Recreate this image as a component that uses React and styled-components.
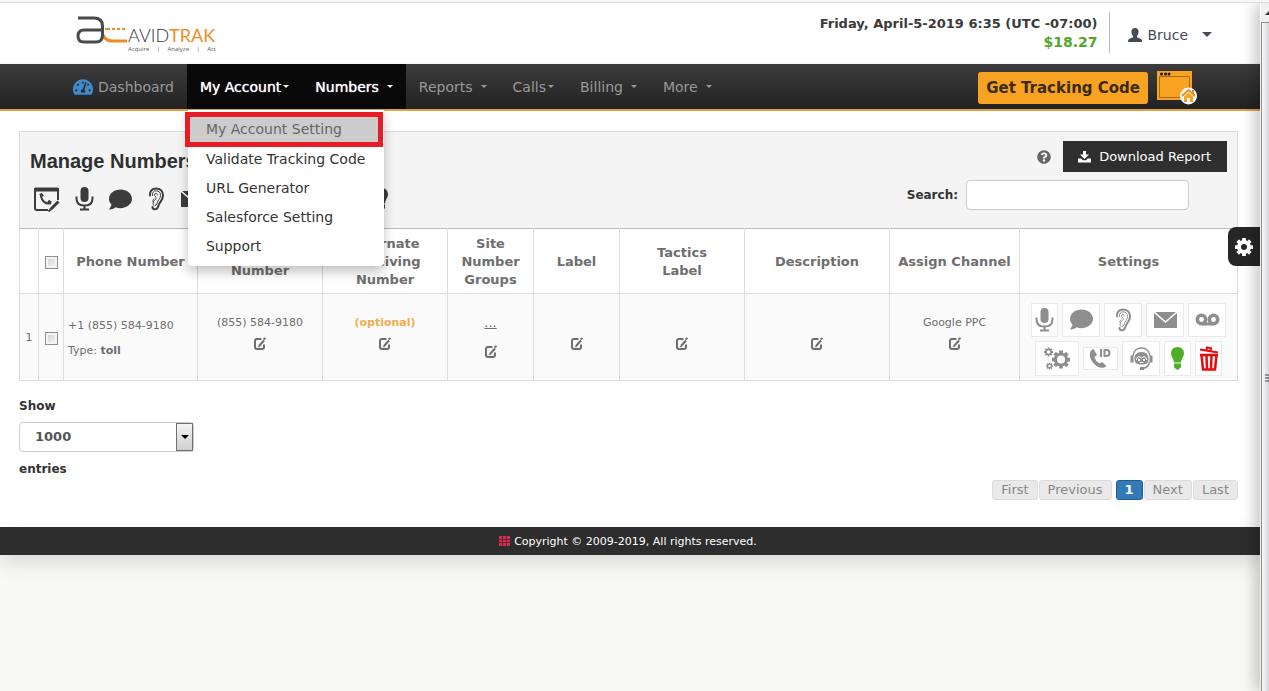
import React from "react";
import styled, { createGlobalStyle, css } from "styled-components";
import { FaTachometerAlt, FaComment, FaQuestionCircle } from "react-icons/fa";

const Global = createGlobalStyle`
  * { box-sizing: border-box; }
  body {
    margin: 0;
    background: #f8f8f6;
    color: #333;
    font-family: "DejaVu Sans", Verdana, sans-serif;
    font-size: 14px;
    overflow: hidden;
  }
  button, input, select { font: inherit; color: inherit; }
  a { color: inherit; text-decoration: none; }
  svg { display: block; flex: none; }
`;

const Window = styled.div`
  display: grid;
  grid-template-columns: 1fr 9px;
  grid-template-rows: 3px 1fr;
  height: 100vh;
`;
const WindowEdge = styled.div`
  grid-column: 1 / -1;
  background: #f6f6f6;
  border-bottom: 1px solid #ddd;
`;
const Page = styled.div`
  position: relative;
  min-width: 0;
`;

/* Browser scroll rail */
const Rail = styled.div`
  position: relative;
  z-index: 30;
  display: flex;
  flex-direction: column;
  background: #f0f0f0;
  box-shadow: -2px 0 16px rgba(0, 0, 0, 0.38);
  clip-path: inset(0 0 0 -24px);
`;
const RailArrow = styled.div`
  height: 19px;
  display: flex;
  align-items: center;
  justify-content: flex-end;
  border-left: 1px solid #fff;
`;
const RailThumb = styled.div`
  flex: 1;
  margin-left: 1px;
  padding-top: 42px;
  display: flex;
  align-items: center;
  justify-content: flex-end;
  border: 1px solid #8f8f8f;
  border-width: 1px 0 0 1px;
  background: linear-gradient(90deg, #f8f8f8, #e6e6e8 60%, #d2d2d6);
`;

/* Header */
const Header = styled.header`
  display: flex;
  justify-content: space-between;
  height: 61px;
  padding: 9px 48px 0 76px;
  background: #fff;
`;
const Logo = styled.a`
  display: flex;
  padding-top: 4px;
`;
const LogoText = styled.div`
  width: 88px;
  padding-top: 9px;
`;
const LogoName = styled.div`
  font: 300 18px/20px Lato, "Open Sans", sans-serif;
  color: #333;
  white-space: nowrap;
  span { color: #ec8d22; font-weight: 400; }
`;
const LogoTag = styled.div`
  display: flex;
  justify-content: space-between;
  font: 6px/8px "Open Sans", sans-serif;
  color: #555;
`;
const Account = styled.div`
  display: flex;
  height: 41px;
`;
const Status = styled.div`
  padding: 3px 12px 0 0;
  border-right: 1px solid #bbb;
  font-weight: bold;
  font-size: 13px;
  line-height: 18px;
  text-align: right;
  color: #3a3a3a;
`;
const Balance = styled.div`
  font-size: 14px;
  color: #53a52b;
`;
const UserButton = styled.button`
  display: flex;
  align-items: center;
  gap: 5px;
  padding: 4px 0 0 18px;
  border: 0;
  background: none;
  color: #444b54;
`;
const Caret = styled.span`
  display: inline-block;
  border: ${(p) => p.$size}px solid transparent;
  border-top-color: currentColor;
  border-bottom: 0;
  margin-left: ${(p) => p.$gap}px;
`;

/* Navigation */
const Nav = styled.nav`
  display: flex;
  justify-content: space-between;
  height: 47px;
  padding: 0 63px 0 60px;
  background: linear-gradient(#3c3c3c, #222);
  border-bottom: 2px solid #e0a045;
  box-shadow: 0 1px 3px rgba(0, 0, 0, 0.2);
`;
const NavList = styled.ul`
  display: flex;
  margin: 0;
  padding: 0;
  list-style: none;
`;
const NavItem = styled.li`
  position: relative;
`;
const NavLink = styled.a`
  display: flex;
  align-items: center;
  gap: ${(p) => p.$gap || 0}px;
  height: 45px;
  padding: 0 13px;
  color: ${(p) => (p.$open ? "#fff" : "#999")};
  background: ${(p) => (p.$open ? "#090909" : "none")};
  ${(p) => p.$open && "text-shadow: 0 0 1px #fff;"}
`;
const Menu = styled.ul`
  position: absolute;
  z-index: 20;
  top: 46px;
  left: 1px;
  width: 196px;
  margin: 0;
  padding: 7px 0 5px;
  list-style: none;
  background: #fff;
  border-radius: 0 0 4px 4px;
  box-shadow: 0 6px 12px rgba(0, 0, 0, 0.24);
`;
const MenuLink = styled.a`
  display: block;
  padding-left: 18px;
  line-height: 29px;
  white-space: nowrap;
  ${(p) => p.$current && css`
    margin: 0 6px 3px 2px;
    padding-left: 16px;
    line-height: 25px;
    color: #666;
    background: #ccc;
    outline: 5px solid #e81c24;
  `}
`;
const NavActions = styled.div`
  display: flex;
  align-items: center;
  gap: 9px;
  padding-top: 2px;
`;
const TrackingButton = styled.button`
  height: 32px;
  padding: 0 8px;
  border: 0;
  border-radius: 3px;
  background: #f8a221;
  color: #3b2a10;
  font-size: 15px;
  font-weight: bold;
  white-space: nowrap;
`;
const IconButton = styled.button`
  display: inline-flex;
  padding: 0;
  border: 0;
  background: none;
`;

/* Content */
const Main = styled.main`
  padding: 20px 22px 27px 19px;
  background: #fff;
`;
const PanelHead = styled.div`
  display: flex;
  justify-content: space-between;
  height: 97px;
  padding: 9px 10px 0;
  background: #f4f4f4;
  border: 1px solid #ddd;
  border-bottom: 0;
`;
const Title = styled.h1`
  margin: 8px 0 13px;
  font: bold 20px/24px "Liberation Sans", Arial, sans-serif;
  color: #2f2f2f;
`;
const Tools = styled.div`
  display: flex;
  align-items: center;
  gap: 13px;
  height: 26px;
  padding-left: 4px;
  color: #3c3c3c;
`;
const HeadRight = styled.div`
  display: flex;
  flex-direction: column;
  align-items: flex-end;
  gap: 8px;
`;
const ReportRow = styled.div`
  display: flex;
  align-items: center;
  gap: 12px;
  color: #666;
`;
const ReportButton = styled.button`
  display: flex;
  align-items: center;
  gap: 8px;
  height: 31px;
  padding: 0 16px 0 15px;
  border: 0;
  background: #2f2f2f;
  color: #fff;
  font-size: 13px;
`;
const SearchRow = styled.label`
  display: flex;
  align-items: center;
  gap: 8px;
  padding-right: 38px;
  font-size: 12px;
  font-weight: bold;
`;
const SearchInput = styled.input`
  width: 223px;
  height: 30px;
  border: 1px solid #ccc;
  border-radius: 4px;
  background: #fff;
`;

const Table = styled.table`
  width: 100%;
  table-layout: fixed;
  border-collapse: collapse;
  color: #6e6e6e;
  font-size: 11px;
`;
const Th = styled.th`
  height: 65px;
  padding: 6px 4px 4px;
  border: 1px solid #ddd;
  border-top: 1px solid #bbb;
  font-size: 13px;
  line-height: 18px;
`;
const Td = styled.td`
  height: 87px;
  padding: ${(p) => (p.$top ? "20px 4px 0" : "2px 4px 0")};
  border: 1px solid #ddd;
  background: #fafafa;
  text-align: ${(p) => p.$align || "center"};
  vertical-align: ${(p) => (p.$top ? "top" : "middle")};
  line-height: ${(p) => (p.$align ? 25 : 18)}px;
  white-space: nowrap;
`;
const Check = styled.input`
  appearance: none;
  display: block;
  width: 13px;
  height: 13px;
  margin: 0 auto;
  border: 1px solid #8e8f8f;
  background: linear-gradient(135deg, #cdd0d4, #f6f6f6);
  box-shadow: inset 0 0 0 2px #f4f4f4;
`;
const CellText = styled.div`
  height: ${(p) => (p.$tall ? 31 : 23)}px;
  ${(p) => p.$optional && "color: #f0ad4e; font-weight: bold;"}
`;
const CellEdit = styled(IconButton)`
  vertical-align: top;
`;
const More = styled.a`
  font-size: 13px;
  text-decoration: underline;
`;
const Actions = styled.div`
  display: flex;
  align-items: center;
  justify-content: center;
  gap: 4px;
  height: 34px;
  margin-top: 2px;
  & + & { margin-top: 4px; height: 35px; }
`;
const Action = styled.button`
  display: flex;
  align-items: center;
  justify-content: center;
  width: ${(p) => p.$w}px;
  height: ${(p) => (p.$short ? "23px" : "100%")};
  padding: 0;
  border: 1px solid #e8ebee;
  background: #fff;
  color: ${(p) => p.$color || "#8e8e8e"};
`;

const TableFoot = styled.div`
  display: flex;
  justify-content: space-between;
  align-items: flex-end;
  padding-top: 15px;
`;
const Length = styled.label`
  display: flex;
  flex-direction: column;
  padding-bottom: 21px;
  font-size: 12px;
  font-weight: bold;
  line-height: 20px;
`;
const SelectBox = styled.span`
  position: relative;
  width: 175px;
  margin: 6px 0 7px;
`;
const Select = styled.select`
  appearance: none;
  display: block;
  width: 100%;
  height: 30px;
  padding: 0 15px;
  border: 1px solid #ccc;
  border-radius: 4px;
  background: #fff;
  color: #555;
  font-size: 13px;
`;
const SelectArrow = styled.span`
  position: absolute;
  top: 1px;
  right: 1px;
  width: 17px;
  height: 28px;
  display: flex;
  align-items: center;
  justify-content: center;
  border: 1px solid #707070;
  background: linear-gradient(#f4f4f4, #cfcfcf);
  color: #000;
  pointer-events: none;
`;
const Pager = styled.div`
  display: flex;
  gap: 1px;
`;
const PageButton = styled.button`
  height: 20px;
  padding: 0 8px;
  margin-left: ${(p) => (p.$current ? 3 : 0)}px;
  border: 1px solid ${(p) => (p.$current ? "#1f5c94" : "#dcdcdc")};
  border-radius: 3px;
  background: ${(p) => (p.$current ? "#337ab7" : "#e9e9e9")};
  color: ${(p) => (p.$current ? "#fff" : "#888")};
  font-size: 13px;
  font-weight: ${(p) => (p.$current ? "bold" : "normal")};
  line-height: 18px;
`;
const Footer = styled.footer`
  display: flex;
  align-items: center;
  justify-content: center;
  gap: 4px;
  height: 28px;
  padding-right: 4px;
  background: #2d2d2d;
  color: #fff;
  font-size: 11px;
  box-shadow: 0 8px 20px rgba(0, 0, 0, 0.12);
`;
const SettingsTab = styled.button`
  position: absolute;
  z-index: 10;
  top: 224px;
  right: 0;
  display: flex;
  align-items: center;
  justify-content: center;
  width: 32px;
  height: 39px;
  padding: 0;
  border: 0;
  border-radius: 8px 0 0 8px;
  background: #262626;
  color: #fff;
`;

const LogoMark = () => (
  <svg width="52" height="28" viewBox="0 0 52 28" fill="none">
    <path d="M27 19q3 6 9 6H51" stroke="#ec8d22" strokeWidth="3" />
    <path d="M29 13h5M36 13h3M41 13h3M46 13h3" stroke="#ec8d22" strokeWidth="2" />
    <path d="M2 2H18Q26.500 2 26.500 10V19Q26.500 26 20 26H8Q2 26 2 20Q2 14 8 14H26" stroke="#4a4a4c" strokeWidth="3" />
  </svg>
);
const SiteIcon = () => (
  <svg width="40" height="34" viewBox="0 0 40 34">
    <path d="M0 0h35v29H0z" fill="#f8a221" />
    <path d="M2.500 5.500h30v21h-30z" fill="none" stroke="#a66a12" />
    <g fill="#221502"><circle cx="4.500" cy="3" r="1.500" /><circle cx="8.500" cy="3" r="1.500" /><circle cx="12" cy="3" r="1.500" /></g>
    <circle cx="31.500" cy="25" r="8.500" fill="#fff" />
    <path d="M25 25l6.500-6 6.500 6M36 23v-4" stroke="#f08a1d" strokeWidth="2" fill="none" />
    <path d="M27 25.500l4.500-4 4.500 4V31h-3v-4h-3v4h-3z" fill="#f8a221" />
  </svg>
);
const UserIcon = () => (
  <svg width="14" height="14" viewBox="0 0 14 14" fill="currentColor">
    <path d="M7 0c2.300 0 3.600 1.500 3.600 3.800 0 1.700-.7 3.200-1.700 4.100v1.300l3.600 1.600c1 .5 1.500 1.200 1.500 3.200H0c0-2 .5-2.700 1.500-3.200l3.600-1.600V7.900C4.100 7 3.400 5.500 3.400 3.800 3.400 1.500 4.700 0 7 0z" />
  </svg>
);
const PhoneEditIcon = () => (
  <svg width="26" height="25" viewBox="0 0 26 25" fill="none" stroke="#3c3c3c">
    <path d="M14 23H3q-2 0-2-2V2h23v11" strokeWidth="2" />
    <path d="M1 2.500h23" strokeWidth="4" />
    <path d="M7 7c0 7 5 11 10 9" strokeWidth="2" />
    <path d="M6.500 6.500l2 3M14 14l3 2" strokeWidth="3" />
    <path d="M16.500 22.500l8-8" strokeWidth="3" />
    <path d="M14.500 24.500l2-2" strokeWidth="2" />
  </svg>
);
const MicIcon = () => (
  <svg width="23" height="24" viewBox="0 0 23 24" fill="none" stroke="currentColor" strokeWidth="2">
    <rect x="7.500" y="0" width="8" height="15" rx="4" fill="currentColor" stroke="none" />
    <path d="M3.500 9.500v2q0 7 8 7t8-7v-2M11.500 18.500v4M7 22.500h9" />
  </svg>
);
const EarIcon = () => (
  <svg width="23" height="24" viewBox="0 0 23 24" fill="none" stroke="currentColor" strokeLinecap="round">
    <path d="M5 8.500C4.500 4 7.500 1.500 11 1.500c4.500 0 7 3 7 7 0 5-3.500 6.500-4.500 10-.7 2.800-2 4-4 3.800-1.200-.1-2-1-2-2.300" strokeWidth="2" />
    <path d="M7.500 8.500c-.3-3 1-4.700 3.500-4.700 3 0 4.700 2 4.500 4.700-.2 2.800-1.500 3.500-2.500 5.500s-1 4.500-3 4.500" strokeWidth="1" />
    <path d="M12.500 8c0-2-2.800-2.500-3 0 0 1.500 2 1.500 1.500 3.500-.3 1.500-1.800 1.500-2.500 3-.5 1-.4 2.500-.2 3.500M9 12c-1.500.5-1.500 2.500-.7 3" strokeWidth="1" />
  </svg>
);
const MailIcon = () => (
  <svg width="23" height="16" viewBox="0 0 23 16" fill="currentColor">
    <path d="M0 0h23v16H0z" />
    <path d="M0 0l11.500 10L23 0" fill="none" stroke="#fff" strokeWidth="1.500" />
  </svg>
);
const VoicemailIcon = () => (
  <svg width="25" height="13" viewBox="0 0 25 13" fill="none" stroke="currentColor" strokeWidth="3.500">
    <circle cx="6.500" cy="6.500" r="4.200" /><circle cx="18.500" cy="6.500" r="4.200" />
    <path d="M7 11h11" strokeWidth="3" />
  </svg>
);
const gearTeeth = [0, 45, 90, 135];
const Gear = ({ x, y, r, tooth, ring }) => (
  <g transform={`translate(${x} ${y})`} stroke="currentColor" fill="none">
    <circle r={r - tooth - ring / 2} strokeWidth={ring} />
    {gearTeeth.map((a) => (
      <path
        key={a}
        transform={`rotate(${a})`}
        strokeWidth={r / 2.4}
        d={`M0 ${-r}V${-r + tooth + 1}M0 ${r}V${r - tooth - 1}`}
      />
    ))}
  </g>
);
const GearIcon = () => (
  <svg width="18" height="18" viewBox="0 0 18 18"><Gear x={9} y={9} r={9} tooth={2} ring={4} /></svg>
);
const GearsIcon = ({ width = 26 }) => (
  <svg width={width} height="23" viewBox="0 0 26 23">
    <Gear x={17} y={12.5} r={9} tooth={2} ring={3} />
    <Gear x={4.5} y={5} r={4.500} tooth={1.2} ring={1.5} />
    <Gear x={5.5} y={19} r={3.500} tooth={1} ring={1.2} />
  </svg>
);
const EditIcon = () => (
  <svg width="14" height="14" viewBox="0 0 14 14" fill="none" stroke="#6e6e6e">
    <path d="M8.500 2H4Q2 2 2 4v6q0 2 2 2h5q2 0 2-2V7.500" strokeWidth="2" />
    <path d="M6 9l5-5.500" strokeWidth="2" />
    <path d="M10.500 2.500l2-1.500" strokeWidth="2" />
    <path d="M4.800 9.700h2" />
  </svg>
);
const DownloadIcon = () => (
  <svg width="13" height="12" viewBox="0 0 13 12" fill="currentColor">
    <path d="M5 0h3v3.500h3L6.500 8 2 3.500h3z" />
    <path d="M0 7.500h3.200L5 9.300h3l1.800-1.800H13V11.500H0z" />
  </svg>
);
const CallerIdIcon = () => (
  <svg width="23" height="22" viewBox="0 0 23 22">
    <path d="M2.500 3C-1 7 1 14 7 18.500c4 3 8 3 10.500.5l-4.500-4-2.500 1.500C8 15 6 12.500 5.500 10L8 8 4.500 2z" fill="currentColor" />
    <path d="M12 2v8M15.500 3h2q3 0 3 3t-3 3h-2z" fill="none" stroke="currentColor" strokeWidth="2" />
  </svg>
);
const RobotIcon = () => (
  <svg width="23" height="23" viewBox="0 0 23 23" fill="none" stroke="currentColor">
    <path d="M3 9C3.500 4 7 1 11.500 1S19.500 4 20 9M19.500 15q-1 5-6 6.500" strokeWidth="1.500" />
    <path d="M2 8.500v7M21 8.500v7" strokeWidth="3" />
    <path d="M11.500 5c5 0 7 3 7 7s-2 5.500-7 5.500-7-1.500-7-5.500 2-7 7-7z" fill="currentColor" stroke="none" />
    <path d="M6.500 13q0-3.500 2.500-3.500l2.500 1.500 2.500-1.500q2.500 0 2.500 3.500M9.500 15.500h4" stroke="#fff" />
    <path d="M9 12v2M14 12v2" stroke="#fff" strokeWidth="2" />
    <path d="M10 21.500h4" strokeWidth="3" />
  </svg>
);
const BulbIcon = ({ width = 13 }) => (
  <svg width={width} height="23" viewBox={`${(13 - width) / 2} 0 ${width} 23`} fill="currentColor">
    <path d="M6.500 0C10.500 0 13 2.800 13 6.300c0 3.500-2.500 5-3 9.200H3c-.5-4.200-3-5.700-3-9.200C0 2.800 2.500 0 6.500 0z" />
    <path d="M3 16.500h7v3.200q0 .8-1 1.300L7.800 22.500H5.200L4 21q-1-.5-1-1.300z" />
  </svg>
);
const TrashIcon = () => (
  <svg width="20" height="25" viewBox="0 0 20 25" fill="none" stroke="#e80c0c">
    <path d="M1 3.500l18 3M7.500 4l.5-2.500 4 .7-.5 2.500" strokeWidth="2" />
    <path d="M1 9h18M2.500 9l1.500 14.500h12L17.500 9M7.500 10l.5 13M12.500 10L12 23" strokeWidth="2.500" />
  </svg>
);
const GridIcon = () => (
  <svg width="11" height="10" viewBox="0 0 11 10">
    <path d="M0 0h11v10H0z" fill="#d2304a" />
    <path d="M3.500 0v10M7.500 0v10M0 3.500h11M0 6.500h11" stroke="#5e2731" />
  </svg>
);

const menu = ["My Account Setting", "Validate Tracking Code", "URL Generator", "Salesforce Setting", "Support"];
const widths = [19, 25, 134, 125, 125, 86, 86, 125, 145, 130, 218];
const EditButton = () => <CellEdit aria-label="Edit"><EditIcon /></CellEdit>;

export default function App() {
  return (
    <>
      <Global />
      <Window>
        <WindowEdge />
        <Page>
          <Header>
            <Logo href="#" aria-label="AvidTrak">
              <LogoMark />
              <LogoText>
                <LogoName>AVID<span>TRAK</span></LogoName>
                <LogoTag><span>Acquire</span><span>|</span><span>Analyze</span><span>|</span><span>Act</span></LogoTag>
              </LogoText>
            </Logo>
            <Account>
              <Status>
                Friday, April-5-2019 6:35 (UTC -07:00)
                <Balance>$18.27</Balance>
              </Status>
              <UserButton><UserIcon />Bruce<Caret $size={5} $gap={9} /></UserButton>
            </Account>
          </Header>

          <Nav>
            <NavList>
              <NavItem><NavLink href="#" $gap={5}><FaTachometerAlt size={20} color="#428bca" />Dashboard</NavLink></NavItem>
              <NavItem>
                <NavLink href="#" $open>My Account<Caret $size={3} $gap={2} /></NavLink>
                <Menu>
                  {menu.map((m, i) => (
                    <li key={m}><MenuLink href="#" $current={i === 0}>{m}</MenuLink></li>
                  ))}
                </Menu>
              </NavItem>
              <NavItem><NavLink href="#" $open>Numbers<Caret $size={3} $gap={8} /></NavLink></NavItem>
              <NavItem><NavLink href="#">Reports<Caret $size={3} $gap={8} /></NavLink></NavItem>
              <NavItem><NavLink href="#">Calls<Caret $size={3} $gap={2} /></NavLink></NavItem>
              <NavItem><NavLink href="#">Billing<Caret $size={3} $gap={8} /></NavLink></NavItem>
              <NavItem><NavLink href="#">More<Caret $size={3} $gap={8} /></NavLink></NavItem>
            </NavList>
            <NavActions>
              <TrackingButton>Get Tracking Code</TrackingButton>
              <IconButton aria-label="Site"><SiteIcon /></IconButton>
            </NavActions>
          </Nav>

          <Main>
            <PanelHead>
              <div>
                <Title>Manage Numbers</Title>
                <Tools>
                  <IconButton aria-label="Edit number"><PhoneEditIcon /></IconButton>
                  <IconButton aria-label="Record"><MicIcon /></IconButton>
                  <IconButton aria-label="Whisper"><FaComment size={23} /></IconButton>
                  <IconButton aria-label="Listen"><EarIcon /></IconButton>
                  <IconButton aria-label="Mail"><MailIcon /></IconButton>
                  <IconButton aria-label="Voicemail"><VoicemailIcon /></IconButton>
                  <IconButton aria-label="Options"><GearsIcon width={30} /></IconButton>
                  <IconButton aria-label="Caller ID"><CallerIdIcon /></IconButton>
                  <IconButton aria-label="Virtual agent"><RobotIcon /></IconButton>
                  <IconButton aria-label="Status"><BulbIcon width={23} /></IconButton>
                </Tools>
              </div>
              <HeadRight>
                <ReportRow>
                  <FaQuestionCircle size={14} />
                  <ReportButton><DownloadIcon />Download Report</ReportButton>
                </ReportRow>
                <SearchRow>Search:<SearchInput type="search" /></SearchRow>
              </HeadRight>
            </PanelHead>

            <Table>
              <colgroup>{widths.map((w, i) => <col key={i} width={w} />)}</colgroup>
              <thead>
                <tr>
                  <Th />
                  <Th><Check type="checkbox" aria-label="Select all" /></Th>
                  <Th>Phone Number</Th>
                  <Th>Receiving Number</Th>
                  <Th>Alternate Receiving Number</Th>
                  <Th>Site Number Groups</Th>
                  <Th>Label</Th>
                  <Th>Tactics<br />Label</Th>
                  <Th>Description</Th>
                  <Th>Assign Channel</Th>
                  <Th>Settings</Th>
                </tr>
              </thead>
              <tbody>
                <tr>
                  <Td>1</Td>
                  <Td><Check type="checkbox" aria-label="Select row 1" /></Td>
                  <Td $align="left">+1 (855) 584-9180<br />Type: <b>toll</b></Td>
                  <Td $top><CellText>(855) 584-9180</CellText><EditButton /></Td>
                  <Td $top><CellText $optional>(optional)</CellText><EditButton /></Td>
                  <Td $top><CellText $tall><More href="#">...</More></CellText><EditButton /></Td>
                  <Td $top><CellText /><EditButton /></Td>
                  <Td $top><CellText /><EditButton /></Td>
                  <Td $top><CellText /><EditButton /></Td>
                  <Td $top><CellText>Google PPC</CellText><EditButton /></Td>
                  <Td>
                    <Actions>
                      <Action $w={27} aria-label="Record"><MicIcon /></Action>
                      <Action $w={38} aria-label="Whisper"><FaComment size={23} /></Action>
                      <Action $w={38} aria-label="Listen"><EarIcon /></Action>
                      <Action $w={38} aria-label="Mail"><MailIcon /></Action>
                      <Action $w={38} aria-label="Voicemail"><VoicemailIcon /></Action>
                    </Actions>
                    <Actions>
                      <Action $w={44} aria-label="Options"><GearsIcon /></Action>
                      <Action $w={35} $short aria-label="Caller ID"><CallerIdIcon /></Action>
                      <Action $w={38} aria-label="Virtual agent"><RobotIcon /></Action>
                      <Action $w={27} $color="#4fae28" aria-label="Status"><BulbIcon /></Action>
                      <Action $w={27} aria-label="Delete"><TrashIcon /></Action>
                    </Actions>
                  </Td>
                </tr>
              </tbody>
            </Table>

            <TableFoot>
              <Length>
                Show
                <SelectBox>
                  <Select defaultValue="1000"><option>1000</option></Select>
                  <SelectArrow><Caret $size={4} $gap={0} /></SelectArrow>
                </SelectBox>
                entries
              </Length>
              <Pager>
                <PageButton>First</PageButton>
                <PageButton>Previous</PageButton>
                <PageButton $current>1</PageButton>
                <PageButton>Next</PageButton>
                <PageButton>Last</PageButton>
              </Pager>
            </TableFoot>
          </Main>
          <Footer><GridIcon />Copyright © 2009-2019, All rights reserved.</Footer>
          <SettingsTab aria-label="Page settings"><GearIcon /></SettingsTab>
        </Page>
        <Rail>
          <RailArrow><svg width="4" height="4" viewBox="0 0 4 4"><path d="M4 0v4H0z" fill="#333" /></svg></RailArrow>
          <RailThumb><svg width="4" height="8" viewBox="0 0 4 8"><path d="M0 1h4M0 4h4M0 7h4" stroke="#444" /></svg></RailThumb>
        </Rail>
      </Window>
    </>
  );
}
